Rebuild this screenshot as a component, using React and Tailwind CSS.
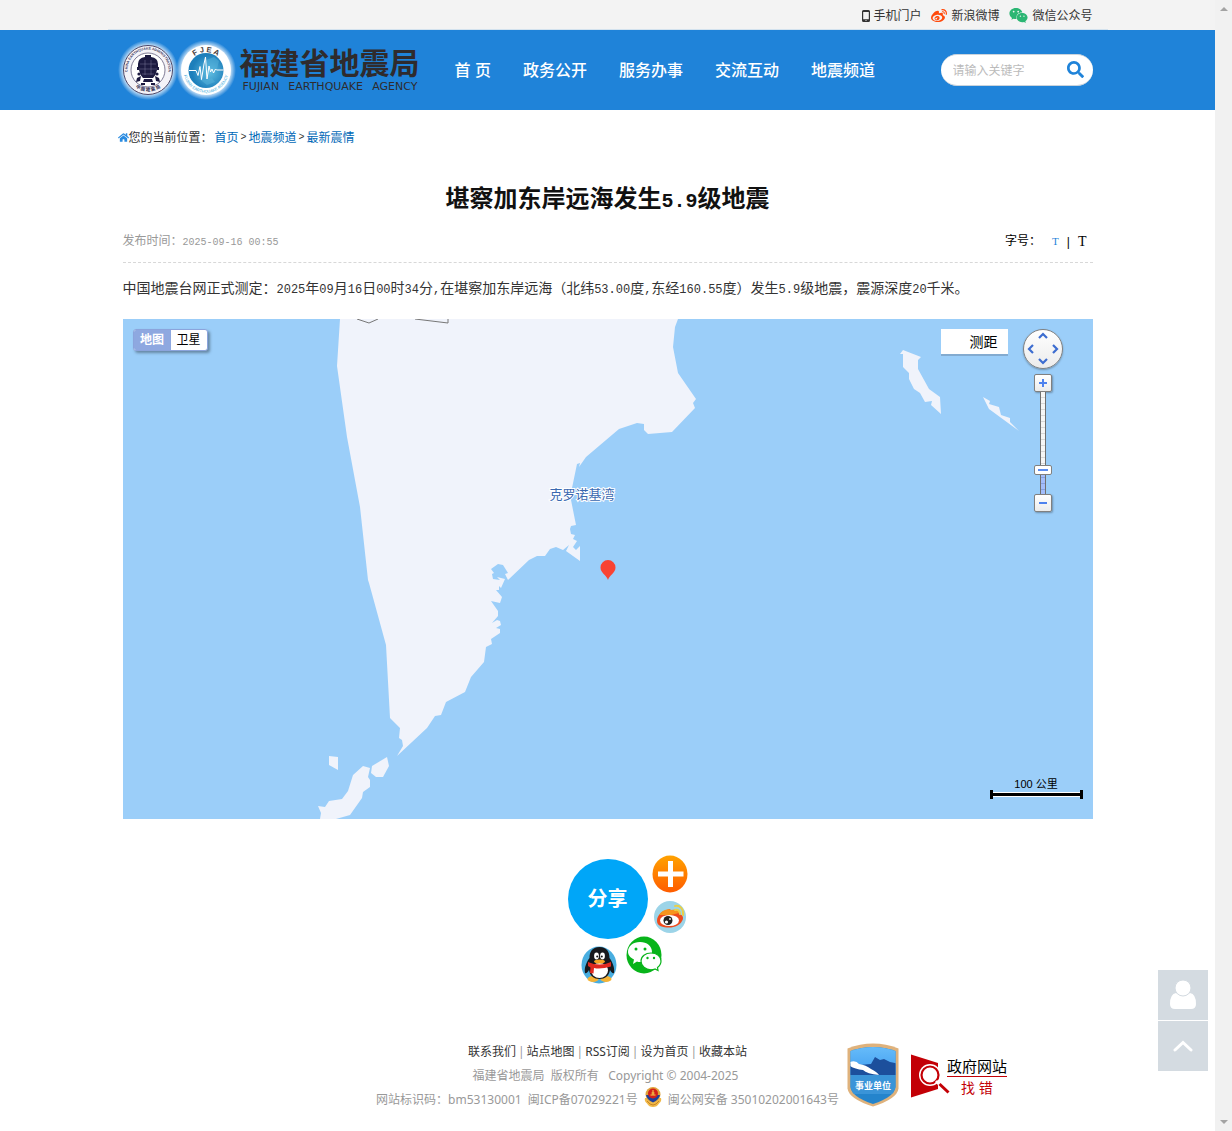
import React, { useState } from 'react';
import { FaWeibo, FaWeixin, FaHome, FaSearch } from 'react-icons/fa';

const navItems = ['首 页', '政务公开', '服务办事', '交流互动', '地震频道'];

const footerLinks = ['联系我们', '站点地图', 'RSS订阅', '设为首页', '收藏本站'];

const mainland =
  'M217 0L214 47L224 118L237 188L245 261L246 264L263 326L267 399L277 409L276 419L279 421L280 427L274 437L304 409L312 397L318 396L323 383L342 373L348 358L361 343L363 328L369 325L368 320L377 314L377 310L373 309L378 306L377 302L374 301L369 304L375 297L375 292L368 282L377 284L379 278L373 271L376 271L376 267L378 269L382 260L374 258L377 261L370 260L369 255L371 254L368 250L375 245L380 246L385 254L382 255L385 261L406 241L414 237L422 237L427 230L433 228L440 231L446 226L443 232L457 242L457 227L453 231L450 228L454 222L450 220L452 216L448 215L447 210L448 207L453 206L448 181L449 169L454 145L457 144L456 148L463 138L496 110L514 104L521 105L521 111L525 115L549 113L572 89L570 84L573 80L555 54L550 28L552 8L555 0Z';

const islands = [
  'M206 437L215 438L215 451L206 446Z',
  'M264 438L266 447L260 458L253 458L248 454L249 447Z',
  'M195 487L202 488L206 482L219 480L225 472L230 456L240 447L247 449L245 458L247 461L247 468L240 473L239 479L227 496L213 500L197 500L198 494Z',
  'M780 31L798 38L795 41L795 50L806 70L817 78L818 95L808 86L809 82L802 83L797 74L791 70L786 60L786 54L780 48L780 35L777 35Z',
  'M860 78L867 82L866 85L876 88L878 96L887 99L887 103L896 112L866 90Z',
];

const AdministrationEmblem = () => (
  <svg viewBox="0 0 60 60" className="h-[60px] w-[60px]" aria-hidden="true">
    <defs>
      <radialGradient id="glowA">
        <stop offset="0.8" stopColor="#fff" stopOpacity="0.8" />
        <stop offset="1" stopColor="#fff" stopOpacity="0" />
      </radialGradient>
      <path id="ringTop" d="M10.700 37a20.500 20.500 0 1 1 38.600 0" />
      <path id="ringBottom" d="M12 42a22 22 0 0 0 36 0" />
    </defs>
    <circle cx="30" cy="30" r="30" fill="url(#glowA)" />
    <circle cx="30" cy="30" r="24.500" fill="#f4f3f8" stroke="#4a4668" />
    <circle cx="30" cy="30" r="17" fill="#fff" stroke="#4a4668" strokeWidth="0.700" />
    <text fontSize="3.500" fontWeight="bold" fill="#3c3960" fontFamily="Liberation Sans">
      <textPath href="#ringTop" startOffset="50%" textAnchor="middle">
        CHINA EARTHQUAKE ADMINISTRATION
      </textPath>
    </text>
    <text fontSize="4.500" fontWeight="bold" fill="#2f2c50" fontFamily="Noto Sans CJK SC">
      <textPath href="#ringBottom" startOffset="50%" textAnchor="middle">
        中 国 地 震 局
      </textPath>
    </text>
    <g fill="#1c1a40">
      <path d="M27 15h6v2q7 1 7 7v3h1v3h-2q-1 5-4 8h-10q-3-3-4-8h-2v-3h1v-3q0-6 7-7z" />
      <circle cx="21" cy="34" r="1.600" />
      <circle cx="39" cy="34" r="1.600" />
      <path d="M19 38l4-2-1 5-4 1zM41 38l-4-2 1 5 4 1zM26 39h8l1 3h-10zM23 43h4v2h-4zM33 43h4v2h-4z" />
    </g>
    <path d="M22 24h16M21 29h18M24 34h12M27 20v15M33 20v15" stroke="#8f8dab" strokeWidth="0.400" />
  </svg>
);

const AgencyEmblem = () => (
  <svg viewBox="0 0 60 60" className="-ml-[2px] h-[60px] w-[60px]" aria-hidden="true">
    <defs>
      <radialGradient id="glowB">
        <stop offset="0.8" stopColor="#fff" stopOpacity="0.8" />
        <stop offset="1" stopColor="#fff" stopOpacity="0" />
      </radialGradient>
      <radialGradient id="globe" cx="0.6" cy="0.55">
        <stop offset="0" stopColor="#62bfe2" />
        <stop offset="1" stopColor="#1d7fbb" />
      </radialGradient>
      <path id="fjeaTop" d="M12 25a19 19 0 0 1 36 0" />
      <path id="fjeaBottom" d="M8 35a22.500 22.500 0 0 0 44 0" />
    </defs>
    <circle cx="30" cy="30" r="30" fill="url(#glowB)" />
    <circle cx="30" cy="30" r="25" fill="#fff" />
    <circle cx="30" cy="30.500" r="17.500" fill="url(#globe)" />
    <path d="M30 20l8-3 5 4-2 8-6 3-5-4zM22 38l8 2 6-2 3 4-8 3z" fill="#58b4dc" opacity="0.500" />
    <text fontSize="7.500" fontWeight="bold" fill="#453b3a" fontFamily="Liberation Sans">
      <textPath href="#fjeaTop" startOffset="50%" textAnchor="middle">
        F J E A
      </textPath>
    </text>
    <text fontSize="4" fill="#2d9fd8" fontFamily="Liberation Sans">
      <textPath href="#fjeaBottom" startOffset="50%" textAnchor="middle">
        FUJIAN EARTHQUAKE AGENCY
      </textPath>
    </text>
    <path
      d="M13 30.500h7l2 5 2-9 1.500 13L28 24l1.500-7 1.500 22 2-13 1.500 6 1.500-3 1.500 4 2-4 1 1h7"
      fill="none"
      stroke="#fff"
      strokeWidth="1"
      strokeLinejoin="round"
    />
  </svg>
);

const TopBar = () => (
  <div className="bg-[#f3f3f3]">
    <div className="mx-auto flex h-[30px] max-w-[1000px] items-center justify-end gap-[10px] border-b border-[#d3e2ee] px-[15px] pt-[2px] text-xs text-[#333]">
      <a href="#mobile" className="flex items-center gap-[3px]">
        <svg viewBox="0 0 8 12" className="h-3 w-2" aria-hidden="true">
          <path
            fillRule="evenodd"
            d="M1.500 0h5a1.500 1.500 0 0 1 1.500 1.500v9a1.500 1.500 0 0 1-1.500 1.500h-5a1.500 1.500 0 0 1-1.500-1.500v-9a1.500 1.500 0 0 1 1.500-1.500zM1.200 2v7.200h5.600v-7.200zM3.400 10.200v0.900h1.200v-0.900z"
            fill="#333"
          />
        </svg>
        手机门户
      </a>
      <a href="#weibo" className="flex items-center gap-1">
        <FaWeibo className="size-4 text-[#ff4a0c]" />
        新浪微博
      </a>
      <a href="#weixin" className="flex items-center gap-1">
        <FaWeixin className="size-[19px] text-[#2bb673]" />
        微信公众号
      </a>
    </div>
  </div>
);

const Header = () => (
  <header className="bg-[#1f83d9]">
    <div className="mx-auto flex h-20 max-w-[1000px] items-center pr-[15px] pl-[10px]">
      <a href="#home" className="flex shrink-0 items-center text-[#2f2b2d]">
        <AdministrationEmblem />
        <AgencyEmblem />
        <span className="ml-1 block w-[181px] pt-[2px]">
          <span className="block text-[30px] leading-8 font-bold">福建省地震局</span>
          <span className="flex justify-between px-[3px] font-['DejaVu_Sans',sans-serif] text-[11px] leading-[14px]">
            <span>FUJIAN</span>
            <span>EARTHQUAKE</span>
            <span>AGENCY</span>
          </span>
        </span>
      </a>
      <nav className="ml-[18px] flex shrink-0 pt-[2px] text-base font-medium text-white">
        {navItems.map((item) => (
          <a key={item} href={`#${item}`} className="px-4">
            {item}
          </a>
        ))}
      </nav>
      <form
        className="ml-auto flex h-8 w-[152px] items-center rounded-full border-y border-[#c9d3dc] bg-white pr-[9px] pl-3"
        onSubmit={(e) => e.preventDefault()}
      >
        <input
          type="text"
          aria-label="搜索"
          placeholder="请输入关键字"
          className="min-w-0 flex-1 pt-px text-xs outline-none placeholder:text-[#bbb]"
        />
        <button type="submit" aria-label="搜索" className="pb-[2px]">
          <FaSearch className="size-[17px] text-[#1f83d9]" />
        </button>
      </form>
    </div>
  </header>
);

const Breadcrumb = () => (
  <nav className="-ml-[5px] flex h-[54px] items-center pt-px text-xs text-[#333]">
    <FaHome className="size-[11px] text-[#2a8be0]" />
    <span className="pr-[2px]">您的当前位置：</span>
    <a href="#home" className="text-[#0068b7]">首页</a>
    <span className="px-[2px] font-['Liberation_Mono',monospace] text-[10px]">&gt;</span>
    <a href="#channel" className="text-[#0068b7]">地震频道</a>
    <span className="px-[2px] font-['Liberation_Mono',monospace] text-[10px]">&gt;</span>
    <a href="#latest" className="text-[#0068b7]">最新震情</a>
  </nav>
);

// digits are set in a monospace face, half as wide as the Chinese characters
const Num = ({ children }) => (
  <span className="font-['Liberation_Mono',monospace] text-xs leading-none">{children}</span>
);

const chevrons = [
  { label: '向上平移', place: 'top-px left-[13px]', d: 'M2 7L6 3L10 7' },
  { label: '向左平移', place: 'top-[13px] left-px', d: 'M8 2L4 6L8 10' },
  { label: '向右平移', place: 'top-[13px] right-px', d: 'M4 2L8 6L4 10' },
  { label: '向下平移', place: 'bottom-px left-[13px]', d: 'M2 4L6 8L10 4' },
];

const ZoomButton = ({ label, d }) => (
  <button
    aria-label={label}
    className="size-[18px] rounded-[2px] border border-[#808080] bg-linear-to-b from-white to-[#ececec] shadow-[1px_1px_2px_rgba(0,0,0,0.3)]"
  >
    <svg viewBox="0 0 16 16" className="size-4" aria-hidden="true">
      <path d={d} stroke="#4e82ee" strokeWidth="2" />
    </svg>
  </button>
);

const MapControls = () => {
  const [zoom, setZoom] = useState(4);

  return (
    <div className="absolute top-[10px] right-[30px] flex w-10 flex-col items-center">
      <div className="relative size-10 rounded-full border border-[#808080] bg-linear-to-b from-white to-[#ececec] shadow-[0_1px_2px_rgba(0,0,0,0.3)]">
        {chevrons.map((c) => (
          <button key={c.label} aria-label={c.label} className={`absolute size-3 ${c.place}`}>
            <svg viewBox="0 0 12 12" className="size-3" aria-hidden="true">
              <path d={c.d} fill="none" stroke="#3d6dd0" strokeWidth="2.200" />
            </svg>
          </button>
        ))}
      </div>
      <div className="mt-[5px] flex flex-col items-center">
        <ZoomButton label="放大" d="M8 4v8M4 8h8" />
        <div className="relative h-[102px] w-[18px]">
          <div className="mx-auto flex h-full w-[6px] flex-col border-x border-[#707070] bg-[repeating-linear-gradient(#f6f6f6_0_5px,#d8d8d8_5px_6px)]">
            <div className="mt-auto h-[22px] bg-[repeating-linear-gradient(#a3bdfb_0_5px,#86a0e0_5px_6px)]" />
          </div>
          <div className="absolute top-[73px] left-0 flex h-[10px] w-[18px] items-center justify-center rounded-[2px] border border-[#808080] bg-white">
            <span className="h-[2px] w-[10px] bg-[#5b8cf0]" />
          </div>
          <input
            type="range"
            aria-label="缩放级别"
            min="1"
            max="19"
            value={zoom}
            onChange={(e) => setZoom(Number(e.target.value))}
            className="absolute inset-0 h-full w-full opacity-0 [writing-mode:vertical-lr]"
          />
        </div>
        <ZoomButton label="缩小" d="M4 8h8" />
      </div>
    </div>
  );
};

const QuakeMap = () => (
  <div className="relative mt-[17px] h-[500px] overflow-hidden bg-[#9bcef9]">
    <svg
      viewBox="0 0 970 500"
      preserveAspectRatio="xMidYMid slice"
      className="h-full w-full"
      role="img"
      aria-label="震中位置地图"
    >
      <path d={mainland} fill="#f0f3fb" />
      {islands.map((d) => (
        <path key={d} d={d} fill="#f0f3fb" />
      ))}
      <path d="M234 0L246 4L255 0M292 0L325 4L325 0" fill="none" stroke="#777" />
      <text
        x="459"
        y="180"
        textAnchor="middle"
        fontSize="13"
        fontFamily="Noto Sans CJK SC, sans-serif"
        fill="#3a68b0"
        stroke="#fff"
        strokeWidth="2"
        paintOrder="stroke"
      >
        克罗诺基湾
      </text>
      <path d="M485 261c-1.500-5-7.500-7-7.500-12.500a7.500 7.500 0 1 1 15 0c0 5.500-6 7.500-7.500 12.500z" fill="#f94333" />
    </svg>

    <div className="absolute top-[10px] left-[10px] flex h-[22px] overflow-hidden rounded-[3px] border border-[#8ba4dc] bg-white text-xs leading-[18px] shadow-[2px_2px_3px_rgba(0,0,0,0.35)]">
      <button className="w-[37px] bg-[#8ea8e0] font-bold text-white">地图</button>
      <button className="w-9 text-black">卫星</button>
    </div>

    <button className="absolute top-[10px] right-[85px] h-[25px] w-[67px] bg-white pr-[10px] text-right text-sm text-black shadow-[0_2px_0_#83abd0]">
      测距
    </button>

    <MapControls />

    <div className="absolute right-[10px] bottom-5 w-[93px] text-center">
      <div className="font-['Liberation_Sans','Noto_Sans_CJK_SC',sans-serif] text-[11px] leading-3 text-black">100 公里</div>
      <div className="flex h-[9px] items-center border-x-[3px] border-black">
        <div className="h-[5px] w-full border-y border-white bg-black" />
      </div>
    </div>
  </div>
);

const Share = () => (
  <div className="relative mx-auto mt-9 h-[129px] w-20">
    <button className="mt-1 size-20 rounded-full bg-[#00a6f8] text-xl font-bold text-white">分享</button>

    <button aria-label="更多分享" className="absolute top-0 left-[84px]">
      <svg viewBox="0 0 36 38" className="h-[38px] w-9" aria-hidden="true">
        <defs>
          <linearGradient id="plusBg" x2="0" y2="1">
            <stop offset="0" stopColor="#ffa200" />
            <stop offset="1" stopColor="#ff5c00" />
          </linearGradient>
        </defs>
        <ellipse cx="18" cy="19" rx="17.500" ry="18.500" fill="url(#plusBg)" />
        <path d="M18.500 6v26M6 19h25.500" stroke="#fff" strokeWidth="5" />
      </svg>
    </button>

    <button aria-label="分享到新浪微博" className="absolute top-[45px] left-[86px]">
      <svg viewBox="0 0 34 34" className="size-[34px]" aria-hidden="true">
        <circle cx="16" cy="17" r="16" fill="#9cd4e8" />
        <path d="M3 21c0-6 5-10 10-11 2-1 4-1 4 1 5-2 8-1 8 3 4 1 5 4 3 7-2 4-7 6.500-13 6.500S3 26 3 21z" fill="#ee4a1c" />
        <path d="M5 15c3-5 9-7 12-5 4-1 8-1 8 3l-8 2z" fill="#f7941d" />
        <ellipse cx="15.500" cy="20.500" rx="9.500" ry="5.500" fill="#fff" />
        <circle cx="14" cy="20.500" r="4.500" fill="#222" />
        <circle cx="12.500" cy="22" r="1.600" fill="#fff" />
        <circle cx="16" cy="19" r="0.900" fill="#fff" />
        <path d="M21 6c5-1 9 3 8 9M21 10c3-1 5 1 5 4" fill="none" stroke="#e8cf4a" strokeWidth="2" strokeLinecap="round" />
      </svg>
    </button>

    <button aria-label="分享到微信" className="absolute top-[81px] left-[58px]">
      <svg viewBox="0 0 36 38" className="h-[38px] w-9" aria-hidden="true">
        <ellipse cx="18" cy="19" rx="17.500" ry="18.500" fill="#08b41a" />
        <path d="M14 6c7 0 12 4 12 10s-5 10-12 10q-2 0-3-0.500l-4 2.500 1-4.500C4.500 22 2 19 2 16 2 10 7 6 14 6z" fill="#fff" />
        <path d="M25 17c6 0 10 3.500 10 8 0 3-1.500 5-3.500 6.500l0.500 3-3-1.500q-2 0.800-4 0.800c-5.500 0-10-4-10-8.800s4.500-8 10-8z" fill="#fff" stroke="#08b41a" strokeWidth="1.200" />
        <g fill="#08b41a">
          <circle cx="10" cy="13" r="1.500" />
          <circle cx="19" cy="13" r="1.500" />
          <circle cx="21.500" cy="22" r="1.200" />
          <circle cx="28" cy="22" r="1.200" />
        </g>
      </svg>
    </button>

    <button aria-label="分享到QQ" className="absolute top-[91px] left-[13px]">
      <svg viewBox="0 0 36 38" className="h-[38px] w-9" aria-hidden="true">
        <ellipse cx="18" cy="19" rx="17.500" ry="18.500" fill="#49aee0" />
        <ellipse cx="12" cy="33" rx="5.500" ry="3" fill="#f5b335" />
        <ellipse cx="25" cy="33" rx="5.500" ry="3" fill="#f5b335" />
        <path d="M18.500 1C11 1 8.500 6 8.500 12c-3 4-5.500 10-4.500 15 1 1 3-1 4-3 1 6 5 9 10.500 9s9.500-3 10.500-9c1 2 3 4 4 3 1-5-1.500-11-4.500-15 0-6-2.500-11-10-11z" fill="#17181c" />
        <ellipse cx="18.500" cy="24.500" rx="8.500" ry="7.500" fill="#fff" />
        <ellipse cx="15.500" cy="10" rx="2.400" ry="3.400" fill="#fff" />
        <ellipse cx="21.500" cy="10" rx="2.400" ry="3.400" fill="#fff" />
        <circle cx="16.200" cy="10.500" r="1" fill="#111" />
        <circle cx="20.800" cy="10.500" r="1" fill="#111" />
        <ellipse cx="18.500" cy="15.500" rx="5.500" ry="2" fill="#f5a623" />
        <path d="M7 16q11.500 5 23 0v4.500q-10 3-17 1.500l-0.500 5.500-3.500-0.500 0.500-5.500-2.500-1.500z" fill="#e02a20" />
      </svg>
    </button>
  </div>
);

const PoliceBadge = () => (
  <svg viewBox="0 0 18 20" className="mx-[6px] -my-2 inline-block h-5 w-[18px] align-[5px]" aria-hidden="true">
    <path d="M1 11q-1 3 2 5.500Q5 20 9 20t6-3.500q3-2.500 2-5.500z" fill="#f0b848" />
    <path d="M3 14q3 4 6 4t6-4" fill="none" stroke="#c98523" />
    <circle cx="9" cy="7.500" r="7.500" fill="#e0a33c" />
    <path d="M2 8h14q-1 5-7 7.500Q3 13 2 8z" fill="#1d3f9c" />
    <circle cx="9" cy="6.500" r="5" fill="#d3201a" />
    <path d="M6.500 8h5M7.500 6h3M9 3v5" stroke="#f7d34c" />
  </svg>
);

const InstitutionBadge = () => (
  <a href="#institution" aria-label="事业单位" className="block">
    <svg viewBox="0 0 52 64" className="h-16 w-[52px]">
      <defs>
        <linearGradient id="shieldSky" x2="0" y2="1">
          <stop offset="0" stopColor="#6cc0fb" />
          <stop offset="1" stopColor="#3f9df0" />
        </linearGradient>
        <clipPath id="shieldClip">
          <path d="M26 4q11 0 22.500 4v36q-1 10-22.500 17Q4.500 54 3.500 44V8Q15 4 26 4z" />
        </clipPath>
      </defs>
      <path d="M26 0.500q13 0 25.500 5v40Q50 56 26 63.500 2 56 0.500 45.500v-40q12.500-5 25.500-5z" fill="#dfb27c" />
      <g clipPath="url(#shieldClip)">
        <path d="M0 0h52v64H0z" fill="#2484cc" />
        <path d="M0 0h52v32H0z" fill="url(#shieldSky)" />
        <path d="M0 32V20l12 2 12-1 4-7 5 3 4-1 6 3 9 2v11z" fill="#1c4f9c" />
        <path d="M3 19q6-2 9 2 7 1 12 5 6 3 8 6-12-1-16-5-8-1-13-4z" fill="#fff" />
        <path d="M3 32h46v19H3z" fill="#3a94d8" />
      </g>
      <text x="26" y="46" textAnchor="middle" fontSize="9" fontWeight="bold" fill="#fff" fontFamily="Noto Sans CJK SC, sans-serif">
        事业单位
      </text>
    </svg>
  </a>
);

const ReportErrorBadge = () => (
  <a href="#report" className="flex items-center">
    <svg viewBox="0 0 39 44" className="h-11 w-[39px]" aria-hidden="true">
      <path d="M0 0.500L27 9v26L0 43.500z" fill="#c30006" />
      <circle cx="19" cy="21" r="11" fill="#fff" />
      <circle cx="19" cy="21" r="8.500" fill="#fff" stroke="#c30006" strokeWidth="2.200" />
      <path d="M25 27l4 4" stroke="#fff" strokeWidth="3" />
      <path d="M28.500 30l9 8.500" stroke="#fff" strokeWidth="5" />
      <path d="M28.500 30l9 8.500" stroke="#c30006" strokeWidth="3" />
    </svg>
    <span className="-ml-[3px] block pt-1 text-center text-[#c30006]">
      <span className="block border-b">
        <span className="block text-[15px] leading-5 text-black">政府网站</span>
      </span>
      <span className="block text-sm leading-[22px]">找 错</span>
    </span>
  </a>
);

const Footer = () => (
  <footer className="mt-[55px] grid grid-cols-[1fr_auto_1fr] pb-[18px] font-['Noto_Sans','Noto_Sans_CJK_SC',sans-serif] text-xs leading-6 text-[#999]">
    <div className="col-start-2 px-1 pt-px text-center">
      <p>
        {footerLinks.map((link, i) => (
          <React.Fragment key={link}>
            {i > 0 && <span className="px-[2px]">|</span>}
            <a href={`#${link}`} className="text-[#333]">
              {link}
            </a>
          </React.Fragment>
        ))}
      </p>
      <p className="pr-1 whitespace-pre">{'福建省地震局  版权所有   Copyright © 2004-2025'}</p>
      <p className="whitespace-nowrap">
        网站标识码：bm53130001&nbsp; 闽ICP备07029221号
        <PoliceBadge />
        闽公网安备 35010202001643号
      </p>
    </div>
    <div className="flex items-start gap-3 pt-1 pl-1">
      <InstitutionBadge />
      <div className="pt-[9px]">
        <ReportErrorBadge />
      </div>
    </div>
  </footer>
);

const SideTools = () => (
  <div className="fixed right-6 bottom-[60px] flex flex-col gap-px">
    <button aria-label="个人中心" className="flex size-[50px] items-center justify-center bg-[#d4dbe1]">
      <svg viewBox="0 0 28 30" className="h-[30px] w-7" aria-hidden="true">
        <path d="M7 13q7 6 14 0 6 1 6 11 0 5-5 5H6q-5 0-5-5Q1 14 7 13z" fill="#fff" />
        <circle cx="14" cy="8" r="8" fill="#fff" stroke="#d4dbe1" />
      </svg>
    </button>
    <button aria-label="返回顶部" className="flex size-[50px] items-center justify-center bg-[#d4dbe1]">
      <svg viewBox="0 0 20 12" className="h-3 w-5" aria-hidden="true">
        <path d="M2 10L10 2.500L18 10" fill="none" stroke="#fff" strokeWidth="3" strokeLinecap="round" />
      </svg>
    </button>
  </div>
);

const ScrollRail = () => (
  <div className="flex w-[17px] shrink-0 flex-col items-center justify-between bg-[#f1f1f1] py-[7px]">
    <span className="h-0 w-0 border-x-4 border-b-4 border-x-transparent border-b-[#a3a3a3]" />
    <span className="h-0 w-0 border-x-4 border-t-4 border-x-transparent border-t-[#a3a3a3]" />
  </div>
);

const App = () => {
  return (
    <div className="flex min-h-screen bg-white font-['Liberation_Sans','Noto_Sans_CJK_SC',sans-serif]">
      <div className="min-w-0 flex-1">
        <TopBar />
        <Header />
        <main className="mx-auto max-w-[1000px] px-[15px]">
          <Breadcrumb />
          <article>
            <h1 className="mt-[17px] text-center text-2xl leading-9 font-bold text-[#111]">
              堪察加东岸远海发生
              <span className="font-['Liberation_Mono',monospace] text-xl leading-none">5.9</span>
              级地震
            </h1>
            <div className="mt-3 flex items-center justify-between border-b border-dashed border-[#d8d8d8] pb-2 text-xs leading-[25px]">
              <p className="text-[#999]">
                发布时间：
                <span className="font-['Liberation_Mono',monospace] text-[10px] leading-none">2025-09-16 00:55</span>
              </p>
              <div className="flex items-center pr-[6px] text-black">
                <span>字号：</span>
                <button className="ml-[11px] font-['Liberation_Serif',serif] text-[11px] leading-none text-[#1f83d9]">T</button>
                <span className="px-2 leading-none">|</span>
                <button className="font-['Liberation_Serif',serif] text-sm leading-none">T</button>
              </div>
            </div>
            <p className="mt-[11px] text-sm leading-7 text-[#333]">
              中国地震台网正式测定：<Num>2025</Num>年<Num>09</Num>月<Num>16</Num>日<Num>00</Num>时
              <Num>34</Num>分<Num>,</Num>在堪察加东岸远海（北纬<Num>53.00</Num>度<Num>,</Num>东经
              <Num>160.55</Num>度）发生<Num>5.9</Num>级地震，震源深度<Num>20</Num>千米。
            </p>
            <QuakeMap />
          </article>
          <Share />
          <Footer />
        </main>
      </div>
      <ScrollRail />
      <SideTools />
    </div>
  );
};

export default App;
